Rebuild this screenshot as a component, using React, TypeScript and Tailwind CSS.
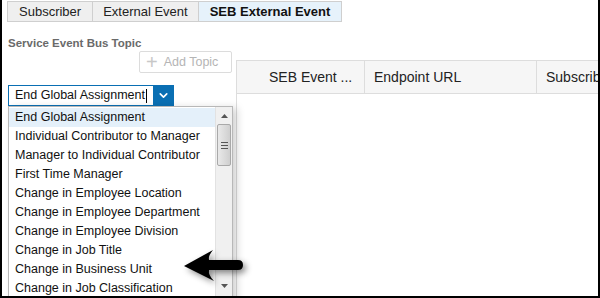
import { ChevronDown } from 'lucide-react'

const items = [
  'End Global Assignment',
  'Individual Contributor to Manager',
  'Manager to Individual Contributor',
  'First Time Manager',
  'Change in Employee Location',
  'Change in Employee Department',
  'Change in Employee Division',
  'Change in Job Title',
  'Change in Business Unit',
  'Change in Job Classification',
]

export default function App() {
  return (
    <div className="relative w-[600px] h-[298px] overflow-hidden bg-white border-l-2 border-r-2 border-b-2 border-black font-['Liberation_Sans',Arial,sans-serif]">
      {/* Tabs */}
      <div className="flex pl-[5px] pt-px">
        <div className="h-[21px] px-[11px] flex items-center bg-[#efefef] border border-[#cfcfcf] text-[13px] text-[#222]">Subscriber</div>
        <div className="h-[21px] px-[10px] flex items-center bg-[#efefef] border border-l-0 border-[#cfcfcf] text-[13px] text-[#222]">External Event</div>
        <div className="h-[21px] px-[11px] flex items-center bg-[#e6f2fb] border border-l-0 border-[#cfcfcf] text-[13px] font-bold text-[#111]">SEB External Event</div>
      </div>

      <div className="flex">
        {/* Left column */}
        <div className="w-[234px] shrink-0 pl-[6px]">
          <p className="mt-[14px] text-[11.5px] font-bold text-[#6a6a6a] leading-[14px]">Service Event Bus Topic</p>
          <div className="flex justify-end pr-[4px] mt-[1px]">
            <button className="h-[22px] w-[93px] flex items-center gap-[6px] pl-[6px] border border-[#dcdcdc] rounded-[2px] bg-white text-[12.5px] text-[#b5b5b5] cursor-pointer">
              <span className="text-[20px] leading-none font-light text-[#c8c8c8]">+</span>
              Add Topic
            </button>
          </div>
          <div className="mt-[12px] w-[166px] h-[21px] flex border border-[#0a6fb3]">
            <div className="flex-1 flex items-center pl-[6px] text-[12.5px] text-[#111]">
              End Global Assignment<span className="w-px h-[14px] bg-black ml-px" />
            </div>
            <div className="w-[20px] bg-[#0a6fb3] flex items-center justify-center">
              <ChevronDown size={13} strokeWidth={3} color="#fff" />
            </div>
          </div>
        </div>

        {/* Table */}
        <div className="flex-1 mt-[38px] h-[240px] border-l border-t border-[#dddddd]">
          <div className="h-[33px] flex bg-[#f6f6f6] border-b border-[#dddddd] text-[14px] text-[#222]">
            <div className="w-[128px] flex items-center pl-[32px] border-r border-[#dddddd]">SEB Event ...</div>
            <div className="w-[172px] flex items-center pl-[9px] border-r border-[#dddddd]">Endpoint URL</div>
            <div className="flex-1 flex items-center pl-[9px] whitespace-nowrap overflow-hidden">Subscrib</div>
          </div>
        </div>
      </div>

      {/* Dropdown list */}
      <div className="absolute left-[6px] top-[106px] w-[225px] h-[200px] bg-white border border-[#b8b8b8] shadow-[4px_2px_8px_rgba(0,0,0,0.18)] flex">
        <div className="flex-1 pt-px">
          {items.map((it, i) => (
            <div key={it} className={`h-[19px] flex items-center pl-[6px] text-[12.5px] text-[#111] ${i === 0 ? 'bg-[#e4f0fa]' : ''}`}>{it}</div>
          ))}
        </div>
        <div className="w-[17px] bg-[#f0f0f0] border-l border-[#e2e2e2] flex flex-col items-center">
          <svg width="7" height="4" className="mt-[7px]"><path d="M0 4 L3.5 0 L7 4 Z" fill="#555" /></svg>
          <div className="mt-[6px] w-[14px] h-[42px] rounded-[2px] border border-[#a9a9a9] bg-gradient-to-r from-[#e9e9e9] via-[#dcdcdc] to-[#cfcfcf] flex flex-col items-center justify-center gap-[2px]">
            <span className="w-[7px] h-px bg-[#555]" />
            <span className="w-[7px] h-px bg-[#555]" />
            <span className="w-[7px] h-px bg-[#555]" />
          </div>
          <svg width="7" height="4" className="mt-[118px]"><path d="M0 0 L7 0 L3.5 4 Z" fill="#555" /></svg>
        </div>
      </div>

      {/* Callout arrow */}
      <svg className="absolute left-0 top-0" width="600" height="298" style={{ filter: 'drop-shadow(3px 3px 3px rgba(0,0,0,0.45))' }}>
        <path d="M182 266 L211 250 Q206 256 207 260 L236 260 Q241 260 241 265 Q241 270 236 270 L207 270 Q206 275 212 281 Z" fill="#000" />
      </svg>
    </div>
  )
}
